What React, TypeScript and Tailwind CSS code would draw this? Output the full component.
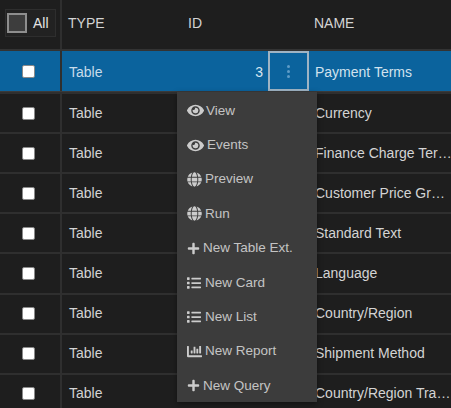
import { FaEye, FaGlobe, FaPlus, FaList, FaChartBar } from "react-icons/fa";

const names = ["Currency", "Finance Charge Ter…", "Customer Price Gr…", "Standard Text", "Language", "Country/Region", "Shipment Method", "Country/Region Tra…"];

const menu = [
  { label: "View", icon: <FaEye size={17} />, w: "w-[19px]" },
  { label: "Events", icon: <FaEye size={17} />, w: "w-[20px]" },
  { label: "Preview", icon: <FaGlobe size={15} />, w: "w-[18px]" },
  { label: "Run", icon: <FaGlobe size={15} />, w: "w-[18px]" },
  { label: "New Table Ext.", icon: <FaPlus size={13} />, w: "w-[16px]" },
  { label: "New Card", icon: <FaList size={14} />, w: "w-[18px]" },
  { label: "New List", icon: <FaList size={14} />, w: "w-[18px]" },
  { label: "New Report", icon: <FaChartBar size={15} />, w: "w-[18px]" },
  { label: "New Query", icon: <FaPlus size={13} />, w: "w-[16px]" },
];

function Check() {
  return (
    <div className="w-[62px] h-full shrink-0 border-r-2 border-[#2f2f2f] flex items-center justify-center pr-[3px]">
      <div className="w-[13px] h-[13px] bg-white rounded-[2px] border border-[#8a8a8a]" />
    </div>
  );
}

export default function App() {
  return (
    <div className="relative w-[451px] h-[408px] overflow-hidden bg-[#1e1e1e] text-[#d4d4d4] text-[14px] font-['Liberation_Sans',Arial,sans-serif]">
      <div className="flex items-center h-[51px] border-b-2 border-[#333333]">
        <div className="w-[62px] h-full shrink-0 border-r-2 border-[#2f2f2f] pl-[5px] pt-[9px]">
          <div className="flex items-center w-[51px] h-[28px] border border-[#2e2e2e] bg-[#222222]">
            <div className="w-[20px] h-[20px] ml-[1px] bg-[#3d3d3d] border-2 border-[#8e8e8e]" />
            <span className="ml-[6px] text-[#e4e4e4]">All</span>
          </div>
        </div>
        <div className="w-[126px] pl-[6px] pb-[3px]">TYPE</div>
        <div className="w-[126px] pb-[3px]">ID</div>
        <div className="pb-[3px]">NAME</div>
      </div>
      <div className="flex items-center h-[41px] bg-[#0b639d] border-b border-[#3a3a3a]">
        <Check />
        <div className="w-[126px] pl-[7px] pt-[2px] text-[#c8dcea]">Table</div>
        <div className="w-[75px] pt-[2px] text-right text-[#d8e6f0]">3</div>
        <div className="ml-[5px] w-[41px] h-full border-2 border-[#9fb4c4] flex items-center justify-center">
          <div className="flex flex-col gap-[2px]">
            <span className="w-[3px] h-[3px] rounded-full bg-[#5f9cc6]" />
            <span className="w-[3px] h-[3px] rounded-full bg-[#5f9cc6]" />
            <span className="w-[3px] h-[3px] rounded-full bg-[#5f9cc6]" />
          </div>
        </div>
        <div className="pl-[6px] pt-[2px] text-[#d2e2ee]">Payment Terms</div>
      </div>
      {names.map((n) => (
        <div key={n} className="flex items-center h-[40.12px] border-t-2 border-[#2f2f2f] first:border-t-0">
          <Check />
          <div className="w-[253px] pl-[7px] shrink-0">Table</div>
          <div className="whitespace-nowrap">{n}</div>
        </div>
      ))}
      <div className="absolute left-[177px] top-[92px] w-[140px] h-[310px] bg-[#3c3c3c] text-[#c4c4c4] text-[13.5px] pt-[1.5px] shadow-[0_2px_6px_rgba(0,0,0,0.4)]">
        {menu.map((m) => (
          <div key={m.label} className="flex items-center h-[34.4px] pl-[10px]">
            <span className={`${m.w} flex items-center justify-start text-[#cccccc]`}>{m.icon}</span>
            <span className="whitespace-nowrap">{m.label}</span>
          </div>
        ))}
      </div>
    </div>
  );
}
